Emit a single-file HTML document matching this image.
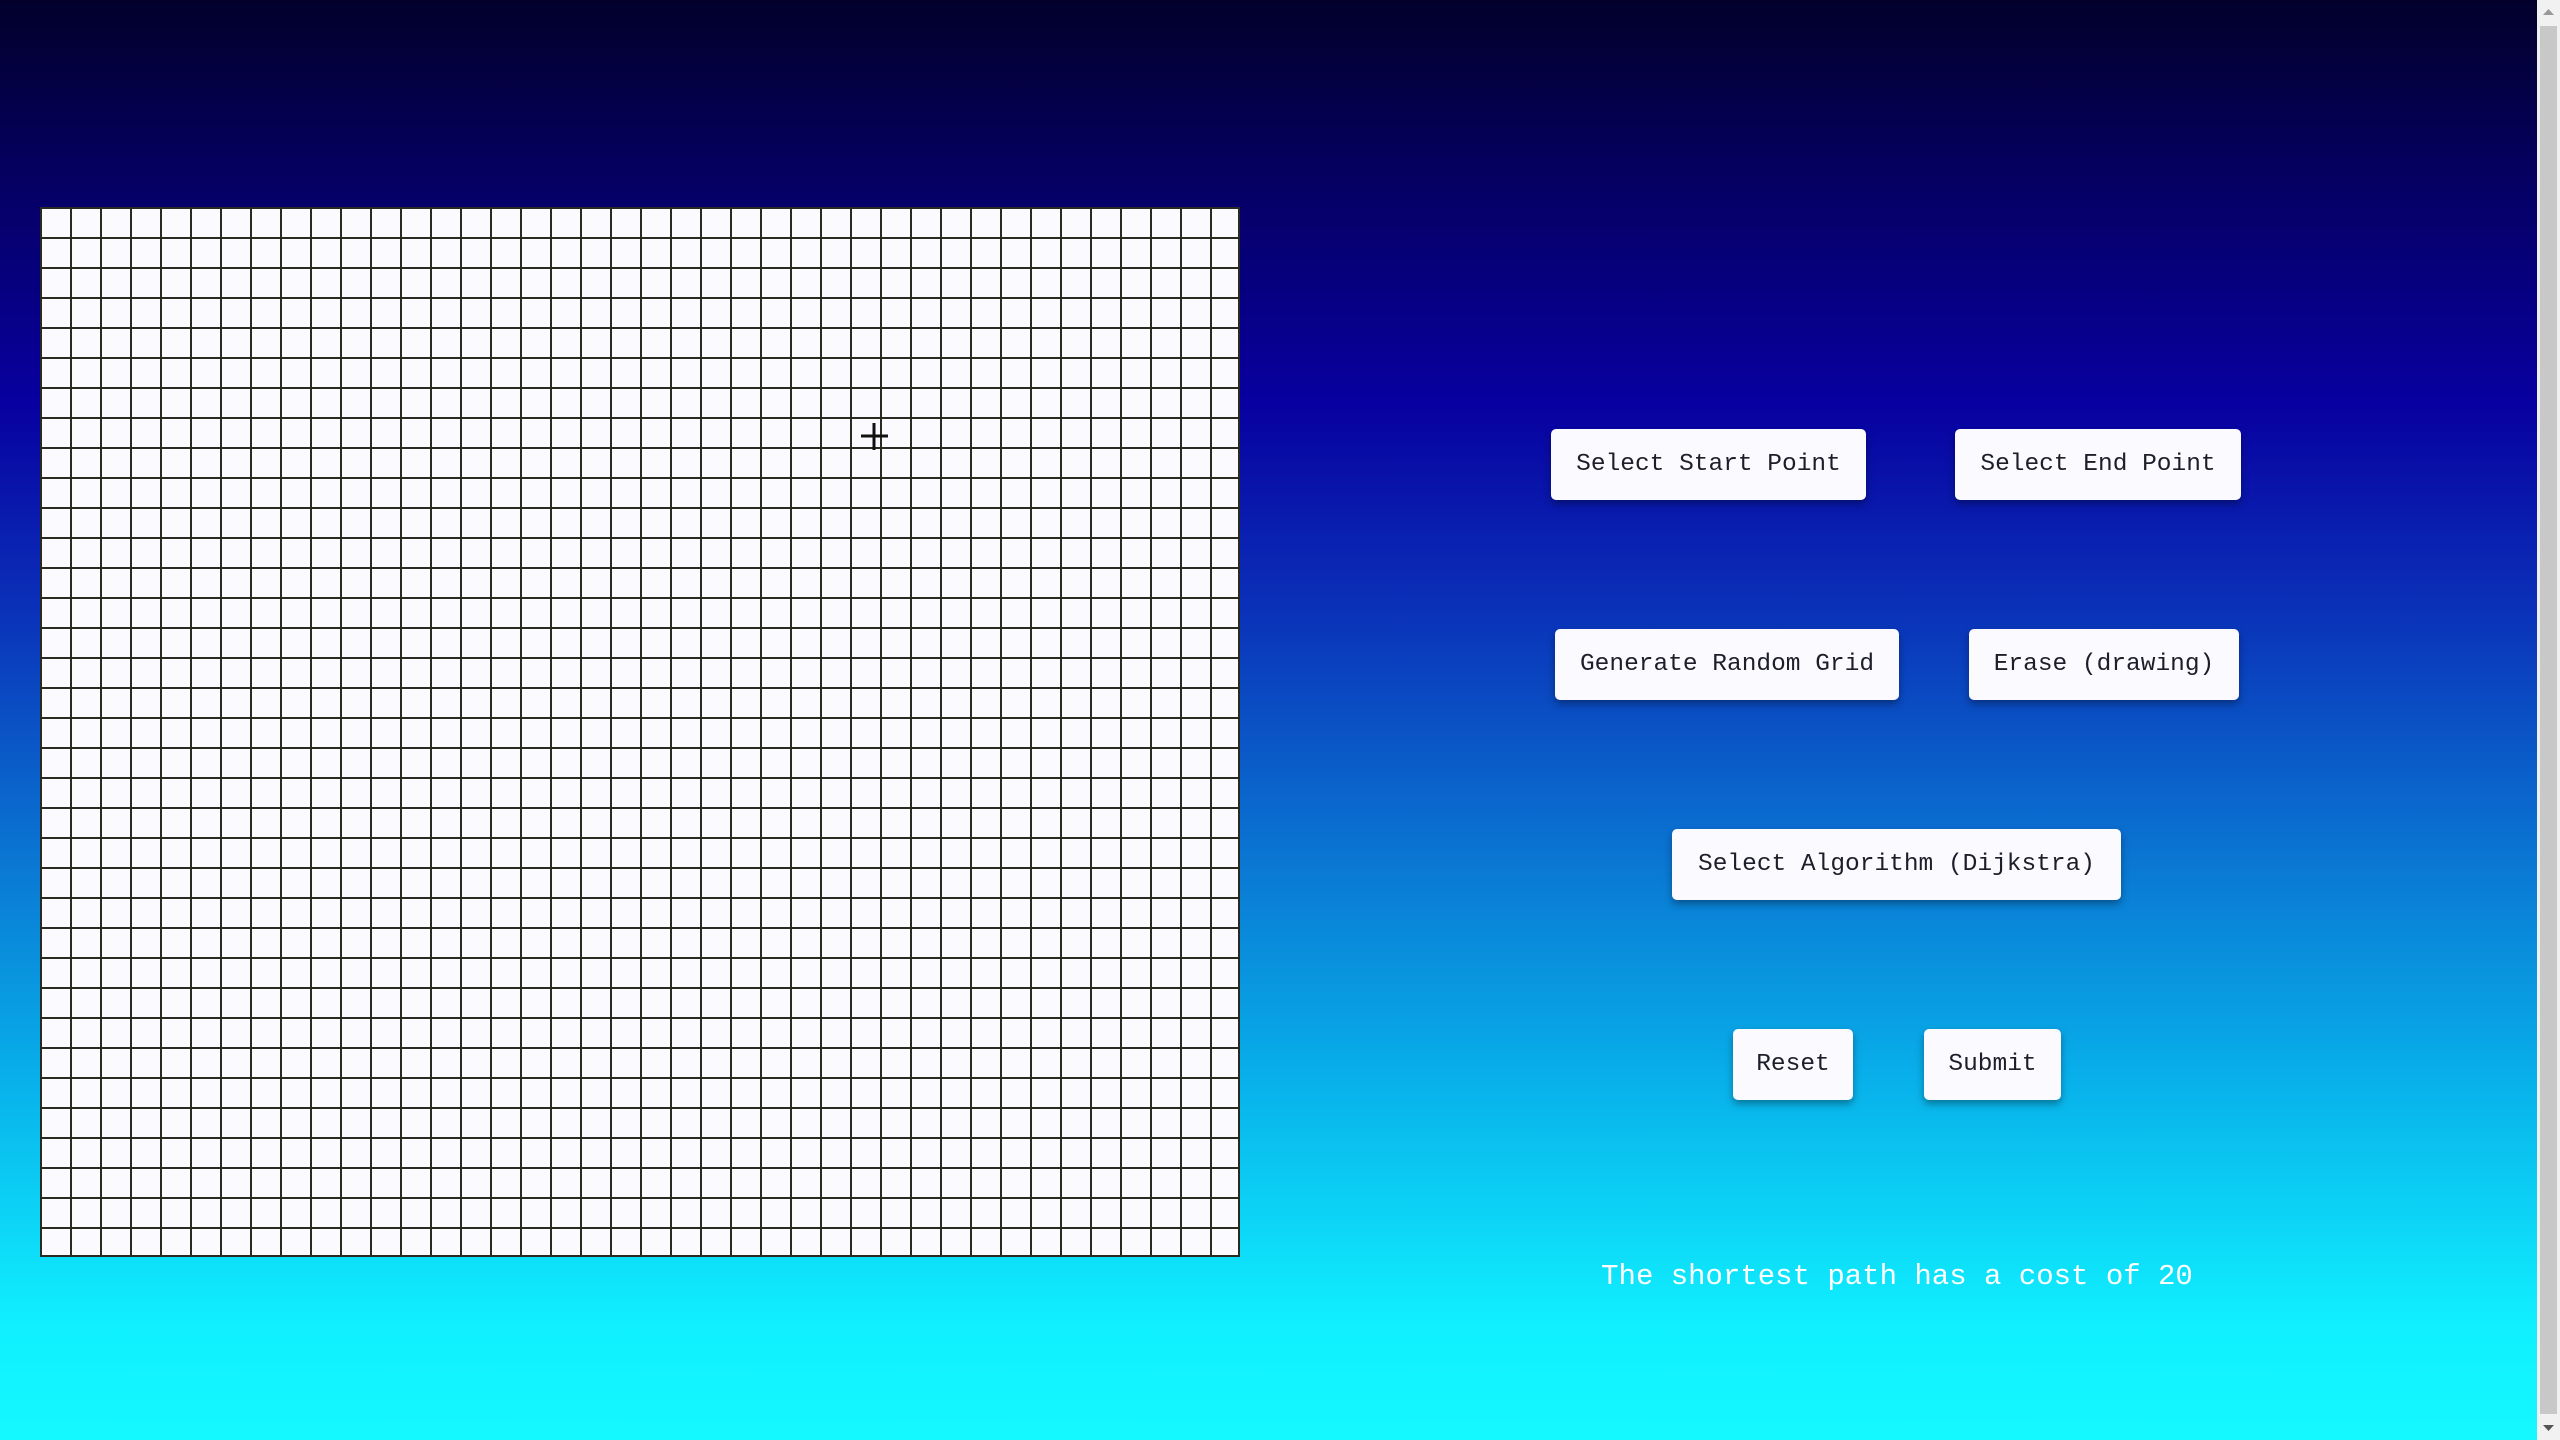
<!DOCTYPE html>
<html><head><meta charset="utf-8"><style>
html,body{margin:0;padding:0;width:2560px;height:1440px;overflow:hidden}
body{font-family:"Liberation Mono",monospace;position:relative}
.bg{position:absolute;left:0;top:0;width:2537px;height:1440px;background:linear-gradient(180deg,#02002a 0%,#050060 12%,#0800a0 28%,#0a30b8 42%,#0a70d0 58%,#08b0ea 75%,#10f0ff 92%,#14f8ff 100%)}
.sb{position:absolute;left:2537px;top:0;width:23px;height:1440px;background:#f1f1f1}
.sb .th{position:absolute;left:3px;top:26px;width:17px;height:1388px;background:#c8c8c8}
.grid{position:absolute;left:40px;top:207px;width:1198px;height:1048px;background-color:#fbfbff;
background-image:linear-gradient(90deg,#2a2a20 2px,transparent 2px),linear-gradient(180deg,#2a2a20 2px,transparent 2px);
background-size:30px 30px;border-right:2px solid #2a2a20;border-bottom:2px solid #2a2a20;box-sizing:content-box}
.btn{position:absolute;background:#fbfbff;border-radius:5px;box-shadow:0 4px 8px rgba(0,0,0,.35);color:#1e1e2a;font-size:24.5px;display:flex;align-items:center;justify-content:center;white-space:pre}
.msg{position:absolute;left:1560px;width:674px;top:1260px;text-align:center;color:#fff;font-size:29px;white-space:pre}
</style></head><body>
<div class="bg"></div>
<div class="grid"></div>
<svg style="position:absolute;left:860px;top:422px" width="30" height="30"><path d="M14 1V28M1 14H28" stroke="#111" stroke-width="3"/></svg>
<div class="btn" style="left:1551px;top:429px;width:315px;height:71px">Select Start Point</div>
<div class="btn" style="left:1955px;top:429px;width:286px;height:71px">Select End Point</div>
<div class="btn" style="left:1555px;top:629px;width:344px;height:71px">Generate Random Grid</div>
<div class="btn" style="left:1969px;top:629px;width:270px;height:71px">Erase (drawing)</div>
<div class="btn" style="left:1672px;top:829px;width:449px;height:71px">Select Algorithm (Dijkstra)</div>
<div class="btn" style="left:1733px;top:1029px;width:120px;height:71px">Reset</div>
<div class="btn" style="left:1924px;top:1029px;width:137px;height:71px">Submit</div>
<div class="msg">The shortest path has a cost of 20</div>
<div class="sb"><div class="th"></div>
<svg style="position:absolute;left:6px;top:8px" width="11" height="8"><path d="M0 7L5.5 1L11 7Z" fill="#999"/></svg>
<svg style="position:absolute;left:6px;top:1424px" width="11" height="8"><path d="M0 1L5.5 7L11 1Z" fill="#555"/></svg>
</div>
</body></html>
